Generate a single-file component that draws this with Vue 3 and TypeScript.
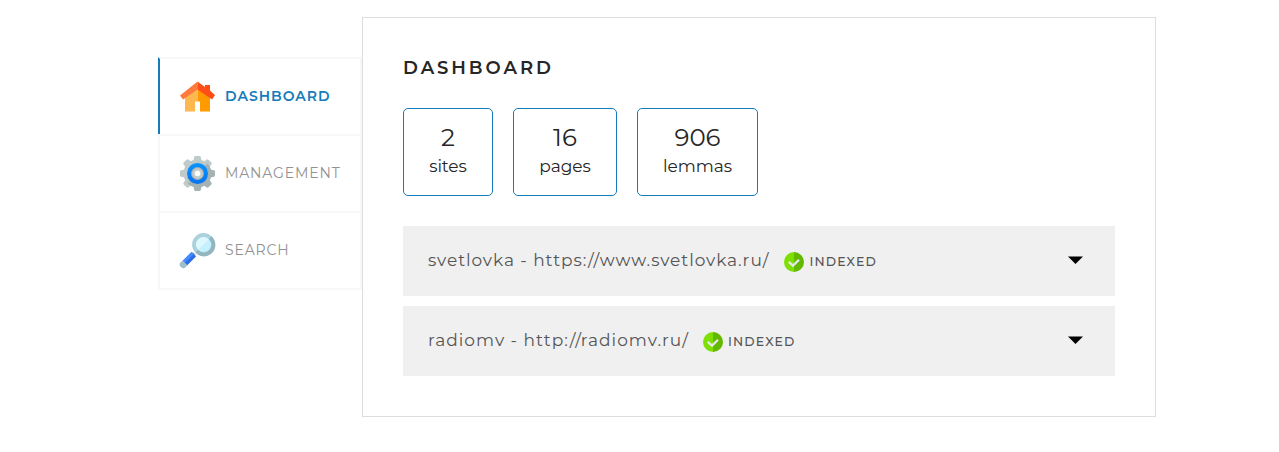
<script setup lang="ts">
interface Stat { value: number; label: string }
interface Site { name: string; url: string; key: string }

const stats: Stat[] = [
  { value: 2, label: 'sites' },
  { value: 16, label: 'pages' },
  { value: 906, label: 'lemmas' },
]
const sites: Site[] = [
  { key: 'svetlovka', name: 'svetlovka', url: 'https://www.svetlovka.ru/' },
  { key: 'radiomv', name: 'radiomv', url: 'http://radiomv.ru/' },
]
const teeth: number[] = [0, 45, 90, 135, 180, 225, 270, 315]
</script>

<template>
  <div class="page">
    <nav class="tabs">
      <a class="tab active">
        <svg class="tab-icon" viewBox="0 0 35 35">
          <path d="M5 17 17.500 6v16.500H15v10H5z" fill="#ffb74f" />
          <path d="M17.500 6 30 17v15.500H20v-10h-2.500z" fill="#ff9a00" />
          <path d="M17.500 2.500v8L3 20.500 0 16.500z" fill="#ff7a3d" />
          <path d="M17.500 2.500 25 8V6h5v5.500l5 4.500-3 4.500L17.500 10.500z" fill="#ff4f19" />
        </svg>
        <span class="tab-text">DASHBOARD</span>
      </a>
      <a class="tab">
        <svg class="tab-icon" viewBox="0 0 35 35">
          <defs>
            <linearGradient id="gear" x1="0" y1="0" x2="1" y2="1">
              <stop offset="0.48" stop-color="#bfcaca" />
              <stop offset="0.52" stop-color="#a4b2b3" />
            </linearGradient>
            <linearGradient id="ring" x1="0" y1="0" x2="0" y2="1">
              <stop offset="0" stop-color="#0795ff" />
              <stop offset="1" stop-color="#0874ee" />
            </linearGradient>
          </defs>
          <path
            v-for="a in teeth" :key="a" d="M13 7 14.200 1q.2-1 1.200-1h4.200q1 0 1.200 1l1.200 6z"
            :transform="`rotate(${a} 17.5 17.5)`" :fill="a > 60 && a < 200 ? '#a4b2b3' : '#bfcaca'"
          />
          <circle cx="17.500" cy="17.500" r="14" fill="url(#gear)" />
          <circle cx="17.500" cy="17.500" r="10.500" fill="url(#ring)" />
          <circle cx="17.500" cy="17.500" r="6.500" fill="#a3adb0" />
          <circle cx="17.500" cy="17.500" r="5.400" fill="#c3cccc" />
          <circle cx="17.500" cy="17.500" r="2.800" fill="#fff" />
        </svg>
        <span class="tab-text">MANAGEMENT</span>
      </a>
      <a class="tab">
        <svg class="tab-icon" viewBox="0 0 35 35">
          <path d="m13 19 3 3-4 3-2-2z" fill="#98b3b9" />
          <path d="m11.500 19 4.500 4.500L7 32.500 2.500 28z" fill="#2e6be6" />
          <path d="m11.500 19 2.200 2.200-9 9L2.500 28z" fill="#438bff" />
          <path d="M2.800 27.700 7.300 32.200 5.800 34a3.200 3.200 0 0 1-5-5z" fill="#9fc0c6" />
          <circle cx="23.500" cy="11.500" r="9" fill="#c5f1ff" />
          <path d="M16.500 18.500a9.900 9.900 0 1 1 14-14z" fill="#dff8ff" />
          <circle cx="23.500" cy="11.500" r="9.500" fill="none" stroke="#a9d2dc" stroke-width="3.800" />
          <path d="M30.200 4.800A9.500 9.500 0 1 1 16.800 18.200" fill="none" stroke="#93b6be" stroke-width="3.800" />
        </svg>
        <span class="tab-text">SEARCH</span>
      </a>
    </nav>

    <main class="panel">
      <h1>DASHBOARD</h1>
      <div class="stats">
        <div v-for="s in stats" :key="s.label" class="stat" :class="s.label">
          <div class="value">{{ s.value }}</div>
          <div class="label">{{ s.label }}</div>
        </div>
      </div>
      <div class="sites-list">
        <div v-for="s in sites" :key="s.key" class="site" :class="s.key">
          <span class="site-name">{{ s.name }} - {{ s.url }}</span>
          <span class="status">
            <svg class="check" viewBox="0 0 20 20">
              <path d="M10 0a10 10 0 0 0 0 20z" fill="#7de000" />
              <path d="M10 0a10 10 0 0 1 0 20z" fill="#62b900" />
              <path d="m4.700 9.800 4.300 3.800 6-5.900" fill="none" stroke="#e6e8e8" stroke-width="2.300" />
            </svg>
            <span class="indexed">INDEXED</span>
          </span>
          <svg class="arrow" viewBox="0 0 15 8"><path d="M0 .5h15L7.500 8z" /></svg>
        </div>
      </div>
    </main>
  </div>
</template>

<style>
body { margin: 0; background: #fff; }
</style>

<style scoped>
.page {
  display: flex;
  align-items: flex-start;
  box-sizing: border-box;
  width: 1279px;
  height: 452px;
  padding: 17px 123px 0 158px;
  overflow: hidden;
  font-family: Montserrat, Inter, "Liberation Sans", sans-serif;
  color: #262626;
}
.page * { box-sizing: border-box; }
.tabs { width: 204px; flex: none; margin-top: 40px; }
.tab {
  display: flex;
  align-items: center;
  height: 77px;
  padding-left: 20px;
  border: 2px solid #f7f7f7;
  border-bottom: 0;
  color: #929292;
  font-size: 14px;
  font-weight: 400;
  white-space: nowrap;
}
.tab:last-child { height: 79px; border-bottom: 2px solid #f7f7f7; }
.tab.active { border-left-color: #157bb9; color: #157bb9; font-weight: 600; }
.tab-icon { width: 35px; height: 35px; margin-right: 10px; flex: none; overflow: visible; }
.tab-text { margin-top: -1px; letter-spacing: .850px; }
.active .tab-text { margin-top: -2px; letter-spacing: 1px; }
.panel {
  flex: 1;
  height: 400px;
  padding: 40px;
  border: 1px solid #ddd;
}
h1 {
  margin: 0;
  height: 20px;
  line-height: 20px;
  font-size: 18px;
  font-weight: 600;
  letter-spacing: 2.950px;
}
.stats { display: flex; gap: 20px; margin-top: 30px; }
.stat {
  height: 88px;
  padding-top: 13px;
  border: 1px solid #157bb9;
  border-radius: 5px;
  text-align: center;
  white-space: nowrap;
}
.stat.sites { width: 90px; }
.stat.pages { width: 104px; }
.stat.lemmas { width: 121px; }
.value { height: 31px; line-height: 30px; font-size: 24.500px; font-weight: 400; }
.label { height: 26px; line-height: 26px; font-size: 17px; font-weight: 400; letter-spacing: -.05px; }
.sites-list { display: flex; flex-direction: column; gap: 10px; margin-top: 30px; }
.site {
  display: flex;
  align-items: center;
  height: 70px;
  padding: 0 32px 0 25px;
  background: #f0f0f0;
  color: #555;
  white-space: nowrap;
}
.site-name { font-size: 17px; line-height: 24px; margin-top: -2px; }
.site.svetlovka .site-name { letter-spacing: .94px; }
.site.radiomv .site-name { letter-spacing: 1.020px; }
.status { display: flex; align-items: center; margin-left: 14px; }
.svetlovka .status { margin-left: 15px; }
.check { width: 20px; height: 20px; margin: 2px 5px 0 0; }
.indexed { font-size: 12.500px; font-weight: 500; letter-spacing: 1.150px; }
.arrow { width: 15px; height: 8px; margin: -3px 0 0 auto; }
</style>
